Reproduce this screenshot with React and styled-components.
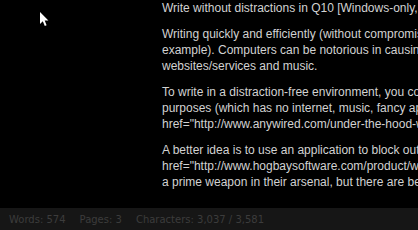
import React from 'react';
import styled, {createGlobalStyle} from "styled-components";

const Global = createGlobalStyle`
  html, body {
    margin: 0;
    padding: 0;
    background: #000;
    overflow: hidden;
  }
`;

const Screen = styled.div`
  position: relative;
  width: 418px;
  height: 230px;
  display: flex;
  flex-direction: column;
  background: #000;
  overflow: hidden;
`;

const Page = styled.div`
  flex: 1;
  padding: 0 0 0 162px;
  overflow: hidden;
`;

const Para = styled.p`
  margin: 0 0 10px 0;
  font-family: "Liberation Sans", Arial, sans-serif;
  font-size: 12px;
  line-height: 16px;
  color: #d2d2d2;
  white-space: nowrap;
`;

const StatusBar = styled.div`
  height: 22px;
  display: flex;
  align-items: center;
  gap: 14px;
  padding: 0 9px;
  background: #161616;
  font-family: "DejaVu Sans", Verdana, sans-serif;
  font-size: 10px;
  color: #3c3c3c;
`;

const Pointer = styled.svg`
  position: absolute;
  left: 39px;
  top: 11px;
`;

function App() {
    return (
        <Screen>
            <Global/>
            <Page>
                <Para>Write without distractions in Q10 [Windows-only, free]</Para>
                <Para>
                    Writing quickly and efficiently (without compromising quality, for<br/>
                    example). Computers can be notorious in causing distractions, with<br/>
                    websites/services and music.
                </Para>
                <Para>
                    To write in a distraction-free environment, you could use a laptop for<br/>
                    purposes (which has no internet, music, fancy apps and so on). &lt;a<br/>
                    href="http://www.anywired.com/under-the-hood-writing-tools"
                </Para>
                <Para>
                    A better idea is to use an application to block out everything else. &lt;a<br/>
                    href="http://www.hogbaysoftware.com/product/writeroom"&gt;WriteRoom&lt;/a&gt; is<br/>
                    a prime weapon in their arsenal, but there are better alternatives.
                </Para>
            </Page>
            <StatusBar>
                <span>Words: 574</span>
                <span>Pages: 3</span>
                <span>Characters: 3,037 / 3,581</span>
            </StatusBar>
            <Pointer width="10" height="16" viewBox="0 0 10 16">
                <path d="M1 1 L1 13 L3.8 10.3 L5.8 15 L7.6 14.2 L5.7 9.6 L9.4 9.6 Z" fill="#fff"/>
            </Pointer>
        </Screen>
    );
}

export default App;
